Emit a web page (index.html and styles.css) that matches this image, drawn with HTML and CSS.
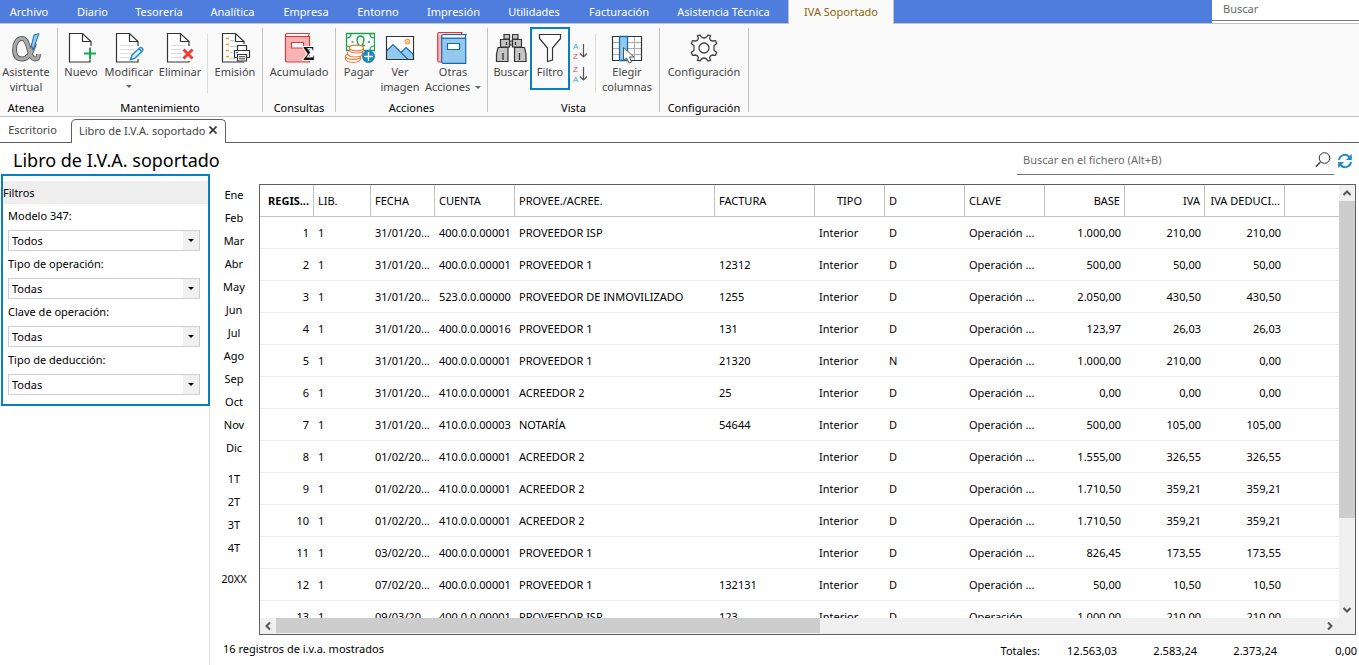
FILE: index.html
```
<!DOCTYPE html>
<html lang="es">
<head>
<meta charset="utf-8">
<title>Libro de I.V.A. soportado</title>
<link rel="stylesheet" href="styles.css">
</head>
<body>
<header class="menubar">
  <nav class="menu">
    <button>Archivo</button><button>Diario</button><button>Tesorería</button><button>Analítica</button><button>Empresa</button><button>Entorno</button><button>Impresión</button><button>Utilidades</button><button>Facturación</button><button>Asistencia Técnica</button><button class="current">IVA Soportado</button>
  </nav>
  <div class="global-search"><input type="text" placeholder="Buscar" aria-label="Buscar"></div>
</header>

<section class="ribbon">
  <div class="group">
    <div class="tools">
      <button class="tool w52">
        <svg viewBox="0 0 32 32"><path d="M24.500 11C22 20 18 27 12 27C7 27 4.500 23.500 4.500 17.500C4.500 11 7.500 6.500 12 6.500C20 6.500 18 27 25 27C28 27 28.500 25 28.500 22" fill="none" stroke="#606060" stroke-width="5"/><path d="M24.500 11C22 20 18 27 12 27C7 27 4.500 23.500 4.500 17.500C4.500 11 7.500 6.500 12 6.500C20 6.500 18 27 25 27C28 27 28.500 25 28.500 22" fill="none" stroke="#aaa" stroke-width="3"/><path d="M24 3L29 1.500L23 18L21.500 13Z" fill="#91c9f0" stroke="#1b6fb5"/></svg>
        <span>Asistente<br>virtual</span></button>
    </div>
    <h2>Atenea</h2>
  </div>
  <div class="group">
    <div class="tools maint">
      <button class="tool w40">
        <svg viewBox="0 0 32 32"><path d="M26 14V9.500L17.500 1.500H4.500V30H25V28M17.500 1.500V9.500H26" fill="#fff" stroke="#333" stroke-width="1.200"/><path d="M25 15.500V27.500M19 21.500H31" stroke="#16a850" stroke-width="2"/></svg>
        <span>Nuevo</span></button>
      <button class="tool w56">
        <svg viewBox="0 0 32 32"><path d="M25 14V9.500L16.500 1.500H3.500V30H25V27M16.500 1.500V9.500H25" fill="#fff" stroke="#333" stroke-width="1.200"/><path d="M7 13.500H21M7 17.500H21M7 21.500H18M7 25.500H16" stroke="#ddd"/><path d="M17.500 27.500L19 23L27 15.500Q28 15 29.500 16.500Q30.500 18 29.500 19L21.500 26.500ZM26 16.500L28.500 19.500" fill="#d7edfb" stroke="#2787cc" stroke-width="1.400"/></svg>
        <span>Modificar</span><i class="caret"></i></button>
      <button class="tool w46">
        <svg viewBox="0 0 32 32"><path d="M25 14V9.500L16.500 1.500H3.500V30H25V29M16.500 1.500V9.500H25" fill="#fff" stroke="#333" stroke-width="1.200"/><path d="M7 13.500H21M7 17.500H18M7 21.500H18M7 25.500H18" stroke="#ddd"/><path d="M19.500 17.500L28.500 26.500M28.500 17.500L19.500 26.500" stroke="#ee3b3b" stroke-width="3"/></svg>
        <span>Eliminar</span></button>
      <hr>
      <button class="tool w44">
        <svg viewBox="0 0 32 32"><path d="M25 12V9.500L16.500 1.500H3.500V30H25M16.500 1.500V9.500H25" fill="#fff" stroke="#333" stroke-width="1.200"/><path d="M7 6.500H10M7 12.500H10M7 18.500H10M7 24.500H10" stroke="#f39a1d" stroke-width="1.400"/><path d="M11 8.500H15M11 14.500H17M11 20.500H14M11 26.500H16" stroke="#c4c4c4"/><path d="M18.500 18.500V13.500H27.500V18.500M18.500 25.500H15.500V18.500H30.500V25.500H27.500M18.500 22.500H27.500V29H18.500Z" fill="#fff" stroke="#333" stroke-width="1.200"/><path d="M20 24.700H26M20 26.800H26" stroke="#333"/><path d="M17 20.500H19" stroke="#1586d0" stroke-width="1.400"/></svg>
        <span>Emisión</span></button>
    </div>
    <h2>Mantenimiento</h2>
  </div>
  <div class="group">
    <div class="tools">
      <button class="tool w66">
        <svg viewBox="0 0 32 32"><path d="M2.500 3Q2.500 1.500 4 1.500H26L25 4.500H26.500V30H4Q2.500 30 2.500 28Z" fill="#f6b4b5" stroke="#e0393c" stroke-width="1.200"/><path d="M3 3.500Q3 2 5 2H25.500L24.500 4.500H4Z" fill="#fff"/><path d="M3 4.500H26" stroke="#e0393c" stroke-width="1.200"/><path d="M8.500 10.500H20.500V16H8.500Z" fill="#fff" stroke="#e0393c" stroke-width="1.200"/><text x="20" y="28" class="sigma">Σ</text></svg>
        <span>Acumulado</span></button>
    </div>
    <h2>Consultas</h2>
  </div>
  <div class="group">
    <div class="tools actions">
      <button class="tool w36">
        <svg viewBox="0 0 32 32"><path d="M3.500 1.500H31.500V18.500H3.500Z" fill="#fff" stroke="#1ba04f" stroke-width="1.300"/><path d="M8 2Q8 6 4 6M27 2Q27 6 31 6M4 14Q8 14 8 18M31 14Q27 14 27 18" fill="none" stroke="#1ba04f" stroke-width="1.200"/><path d="M14 13.500H16Q13.500 10 14 7Q15 4 17.500 4Q20.500 4 21 7Q21 10 19 13.500H22M8.500 10H10.500M25 10H27" fill="none" stroke="#1ba04f" stroke-width="1.400"/><g fill="#fff" stroke="#ec7a3c" stroke-width="1.200"><path d="M2.500 24V27Q3 30 10 30.500Q17 30 17.500 27V24"/><ellipse cx="10" cy="24.500" rx="7.500" ry="2.800"/><path d="M4.500 20V22Q6 25 12 25Q19 25 19.500 22V19"/><path d="M6.500 16V18Q7 21 13.500 21Q20 21 20.500 18V16"/><ellipse cx="13.500" cy="16" rx="7" ry="2.800"/></g><circle cx="25.500" cy="24.500" r="6.500" fill="#1886c9"/><path d="M25.500 20V29M21 24.500H30" stroke="#fff" stroke-width="1.400"/></svg>
        <span>Pagar</span></button>
      <button class="tool w44">
        <svg viewBox="0 0 32 32"><path d="M2.500 4.500H29.500V27.500H2.500Z" fill="#fff"/><path d="M2.500 19L9 12.500L17 20.500L22 15.500L29.500 22V27.500H2.500Z" fill="#93c9ee"/><path d="M2.500 19L9 12.500L24 27.500M17 20.500L22 15.500L29.500 22.500" fill="none" stroke="#176db1" stroke-width="1.200"/><circle cx="23.500" cy="9.500" r="2.500" fill="#fbd58a" stroke="#ec8b42"/><path d="M2.500 4.500H29.500V27.500H2.500Z" fill="none" stroke="#333" stroke-width="1.200"/></svg>
        <span>Ver<br>imagen</span></button>
      <button class="tool w60">
        <svg viewBox="0 0 32 32"><path d="M.7 2Q.7.7 2 .7H25L24 3H26V30H2Q.7 30 .7 28Z" fill="#f6b4b5" stroke="#e0393c" stroke-width="1.200"/><path d="M1.500 1.500H24L23 3H2Z" fill="#fff"/><path d="M4.700 4Q4.700 2.500 6 2.500H29L28 6H28.700V31.300H6Q4.700 31 4.700 29Z" fill="#93c9ee" stroke="#1769ad" stroke-width="1.200"/><path d="M5.500 3.200H28L27.500 5.500H6Z" fill="#fff"/><path d="M5 6.300H28.500" stroke="#1769ad" stroke-width="1.200"/><path d="M10.500 11.500H22.500V17.500H10.500Z" fill="#fff" stroke="#1769ad" stroke-width="1.200"/></svg>
        <span>Otras<br>Acciones <i class="caret"></i></span></button>
    </div>
    <h2>Acciones</h2>
  </div>
  <div class="group">
    <div class="tools view">
      <button class="tool w36">
        <svg viewBox="0 0 32 32"><g fill="#c4c4c4" stroke="#333" stroke-width="1.200"><path d="M9 2.500H14.500V7H9ZM17.500 2.500H23V7H17.500Z"/><path d="M5.500 7.500H14.500V15H5.500ZM17.500 7.500H26.500V15H17.500ZM14.500 9H17.500V13H14.500Z"/><path d="M3 15.500H13V29.500H1.500V22ZM19.500 15.500H29.500L31 22V29.500H19.500Z"/></g><path d="M11.500 10V13M20.500 10V13M8 21V28M24.500 21V28" stroke="#333" stroke-width="1.300"/></svg>
        <span>Buscar</span></button>
      <button class="tool filter">
        <svg viewBox="0 0 32 32"><path d="M5.500 2.500H26.500V6.500L18.500 16V28L13.500 29.500V16L5.500 6.500Z" fill="#fff" stroke="#333" stroke-width="1.200"/></svg>
        <span>Filtro</span></button>
      <div class="sorts">
        <button aria-label="Orden ascendente"><svg viewBox="0 0 16 20"><text x="1" y="8" fill="#4a9bd8">A</text><text x="1" y="18" fill="#e0504f">Z</text><path d="M11.500 3V16M8 12.500L11.500 16L15 12.500" fill="none" stroke="#555" stroke-width="1.200"/></svg></button>
        <button aria-label="Orden descendente"><svg viewBox="0 0 16 20"><text x="1" y="8" fill="#e0504f">Z</text><text x="1" y="18" fill="#4a9bd8">A</text><path d="M11.500 3V16M8 12.500L11.500 16L15 12.500" fill="none" stroke="#555" stroke-width="1.200"/></svg></button>
      </div>
      <hr>
      <button class="tool w52">
        <svg viewBox="0 0 32 32"><path d="M1.500 4.500H30.500V28.500H1.500Z" fill="#fff"/><path d="M1.500 10.500H30.500M1.500 16.500H30.500M1.500 22.500H30.500M23.500 4.500V28.500" stroke="#aaa"/><path d="M1.500 4.500H30.500V28.500H1.500Z" fill="none" stroke="#333" stroke-width="1.200"/><path d="M8.500 4.500H16.500V28.500H8.500Z" fill="#93c9ee" stroke="#1769ad" stroke-width="1.300"/><path d="M12.500 15.500V28.500L15.500 26L18 31L20.500 30L18.500 25H23Z" fill="#fff" stroke="#555"/></svg>
        <span>Elegir<br>columnas</span></button>
    </div>
    <h2>Vista</h2>
  </div>
  <div class="group">
    <div class="tools">
      <button class="tool w82">
        <svg viewBox="0 0 32 32"><path d="M10.400 6.300L9.400 3.600L12 3Q13.500 6 16 6T20 3L22.600 3.600L21.600 6.300Q22 8.500 24.500 9L27.500 8.700L28.600 11.500L26 13.700V18.300L28.600 20.500L27.500 23.300L24.500 23Q22 23.500 21.600 25.700L22.600 28.400L20 29Q18.500 26 16 26T12 29L9.400 28.400L10.400 25.700Q10 23.500 7.500 23L4.500 23.300L3.400 20.500L6 18.300V13.700L3.400 11.500L4.500 8.700L7.500 9Q10 8.500 10.400 6.300Z" fill="#fff" stroke="#444" stroke-width="1.300"/><circle cx="16" cy="16" r="5" fill="none" stroke="#444" stroke-width="1.300"/></svg>
        <span>Configuración</span></button>
    </div>
    <h2>Configuración</h2>
  </div>
</section>

<nav class="doc-tabs">
  <button class="doc-tab desktop">Escritorio</button>
  <div class="doc-tab active"><span>Libro de I.V.A. soportado</span><button aria-label="Cerrar"><svg viewBox="0 0 8 8"><path d="M.5.5L7.500 7.500M7.500.5L.5 7.500" stroke="#333" stroke-width="1.600"/></svg></button></div>
  <div class="rest"></div>
</nav>

<div class="title-row">
  <h1>Libro de I.V.A. soportado</h1>
  <div class="file-search">
    <input type="text" placeholder="Buscar en el fichero (Alt+B)" aria-label="Buscar en el fichero">
    <svg viewBox="0 0 16 16"><circle cx="9.500" cy="6" r="5.300" fill="none" stroke="#333"/><path d="M5.500 10L.8 14.700" stroke="#333" stroke-width="1.300"/></svg>
  </div>
  <button class="refresh" aria-label="Actualizar"><svg viewBox="0 0 16 16"><path d="M2 7A6 6 0 0 1 12.500 4M14 9A6 6 0 0 1 3.500 12" fill="none" stroke="#2188cb" stroke-width="2"/><path d="M14.800 1V7H9ZM1.200 15V9H7Z" fill="#2188cb"/></svg></button>
</div>

<main class="workspace">
  <aside class="sidebar">
    <form class="filters">
      <h2>Filtros</h2>
      <label for="f1">Modelo 347:</label>
      <div class="select"><select id="f1"><option>Todos</option></select></div>
      <label for="f2">Tipo de operación:</label>
      <div class="select"><select id="f2"><option>Todas</option></select></div>
      <label for="f3">Clave de operación:</label>
      <div class="select"><select id="f3"><option>Todas</option></select></div>
      <label for="f4">Tipo de deducción:</label>
      <div class="select"><select id="f4"><option>Todas</option></select></div>
    </form>
  </aside>
  <nav class="periods">
    <button>Ene</button><button>Feb</button><button>Mar</button><button>Abr</button><button>May</button><button>Jun</button><button>Jul</button><button>Ago</button><button>Sep</button><button>Oct</button><button>Nov</button><button>Dic</button>
    <button class="first">1T</button><button>2T</button><button>3T</button><button>4T</button>
    <button class="first">20XX</button>
  </nav>
  <section class="content">
    <div class="grid">
      <div class="viewport">
        <table>
          <colgroup><col class="c54"><col class="c57"><col class="c64"><col class="c80"><col class="c200"><col class="c100"><col class="c70"><col class="c80"><col class="c80"><col class="c80"><col class="c80"><col class="c80"><col></colgroup>
          <thead><tr><th class="key">REGIS...</th><th>LIB.</th><th>FECHA</th><th>CUENTA</th><th>PROVEE./ACREE.</th><th>FACTURA</th><th class="mid">TIPO</th><th>D</th><th>CLAVE</th><th class="num">BASE</th><th class="num">IVA</th><th class="num">IVA DEDUCI...</th><th></th></tr></thead>
          <tbody>
            <tr><td>1</td><td>1</td><td>31/01/20...</td><td>400.0.0.00001</td><td>PROVEEDOR ISP</td><td></td><td>Interior</td><td>D</td><td>Operación ...</td><td>1.000,00</td><td>210,00</td><td>210,00</td><td></td></tr>
            <tr><td>2</td><td>1</td><td>31/01/20...</td><td>400.0.0.00001</td><td>PROVEEDOR 1</td><td>12312</td><td>Interior</td><td>D</td><td>Operación ...</td><td>500,00</td><td>50,00</td><td>50,00</td><td></td></tr>
            <tr><td>3</td><td>1</td><td>31/01/20...</td><td>523.0.0.00000</td><td>PROVEEDOR DE INMOVILIZADO</td><td>1255</td><td>Interior</td><td>D</td><td>Operación ...</td><td>2.050,00</td><td>430,50</td><td>430,50</td><td></td></tr>
            <tr><td>4</td><td>1</td><td>31/01/20...</td><td>400.0.0.00016</td><td>PROVEEDOR 1</td><td>131</td><td>Interior</td><td>D</td><td>Operación ...</td><td>123,97</td><td>26,03</td><td>26,03</td><td></td></tr>
            <tr><td>5</td><td>1</td><td>31/01/20...</td><td>400.0.0.00001</td><td>PROVEEDOR 1</td><td>21320</td><td>Interior</td><td>N</td><td>Operación ...</td><td>1.000,00</td><td>210,00</td><td>0,00</td><td></td></tr>
            <tr><td>6</td><td>1</td><td>31/01/20...</td><td>410.0.0.00001</td><td>ACREEDOR 2</td><td>25</td><td>Interior</td><td>D</td><td>Operación ...</td><td>0,00</td><td>0,00</td><td>0,00</td><td></td></tr>
            <tr><td>7</td><td>1</td><td>31/01/20...</td><td>410.0.0.00003</td><td>NOTARÍA</td><td>54644</td><td>Interior</td><td>D</td><td>Operación ...</td><td>500,00</td><td>105,00</td><td>105,00</td><td></td></tr>
            <tr><td>8</td><td>1</td><td>01/02/20...</td><td>410.0.0.00001</td><td>ACREEDOR 2</td><td></td><td>Interior</td><td>D</td><td>Operación ...</td><td>1.555,00</td><td>326,55</td><td>326,55</td><td></td></tr>
            <tr><td>9</td><td>1</td><td>01/02/20...</td><td>410.0.0.00001</td><td>ACREEDOR 2</td><td></td><td>Interior</td><td>D</td><td>Operación ...</td><td>1.710,50</td><td>359,21</td><td>359,21</td><td></td></tr>
            <tr><td>10</td><td>1</td><td>01/02/20...</td><td>410.0.0.00001</td><td>ACREEDOR 2</td><td></td><td>Interior</td><td>D</td><td>Operación ...</td><td>1.710,50</td><td>359,21</td><td>359,21</td><td></td></tr>
            <tr><td>11</td><td>1</td><td>03/02/20...</td><td>400.0.0.00001</td><td>PROVEEDOR 1</td><td></td><td>Interior</td><td>D</td><td>Operación ...</td><td>826,45</td><td>173,55</td><td>173,55</td><td></td></tr>
            <tr><td>12</td><td>1</td><td>07/02/20...</td><td>400.0.0.00001</td><td>PROVEEDOR 1</td><td>132131</td><td>Interior</td><td>D</td><td>Operación ...</td><td>50,00</td><td>10,50</td><td>10,50</td><td></td></tr>
            <tr><td>13</td><td>1</td><td>09/03/20...</td><td>400.0.0.00001</td><td>PROVEEDOR ISP</td><td>123</td><td>Interior</td><td>D</td><td>Operación ...</td><td>1.000,00</td><td>210,00</td><td>210,00</td><td></td></tr>
          </tbody>
        </table>
      </div>
      <div class="vbar">
        <button aria-label="Subir"><svg viewBox="0 0 16 16"><path d="M4.500 10L8 6.500L11.500 10" fill="none" stroke="#555" stroke-width="2"/></svg></button>
        <div class="track"><div class="thumb"></div></div>
        <button aria-label="Bajar"><svg viewBox="0 0 16 16"><path d="M4.500 6L8 9.500L11.500 6" fill="none" stroke="#555" stroke-width="2"/></svg></button>
      </div>
      <div class="hbar">
        <button aria-label="Izquierda"><svg viewBox="0 0 16 16"><path d="M10 4.500L6.500 8L10 11.500" fill="none" stroke="#555" stroke-width="2"/></svg></button>
        <div class="track"><div class="thumb"></div></div>
        <button aria-label="Derecha"><svg viewBox="0 0 16 16"><path d="M6 4.500L9.500 8L6 11.500" fill="none" stroke="#555" stroke-width="2"/></svg></button>
      </div>
    </div>
  </section>
  <footer class="status">
    <p>16 registros de i.v.a. mostrados</p>
    <div class="totals"><span>Totales:</span><span>12.563,03</span><span>2.583,24</span><span>2.373,24</span><span>0,00</span></div>
  </footer>
</main>
</body>
</html>
```
FILE: styles.css
```
* { box-sizing: border-box; }
body {
  margin: 0;
  height: 100vh;
  display: flex;
  flex-direction: column;
  overflow: hidden;
  background: #fff;
  color: #000;
  font: 11px/15px "Noto Sans", "Open Sans", sans-serif;
}
button, input, select { font: inherit; color: inherit; margin: 0; padding: 0; border: 0; background: none; }
h1, h2, p { margin: 0; font-size: inherit; font-weight: 400; }
svg { display: block; flex: none; }

/* Menu bar */
.menubar { display: flex; height: 24px; background: #4e7ddd; border-bottom: 1px solid #c2c2c2; flex: none; }
.menu { display: grid; grid-template-columns: 58px 69px 64px 83px 64px 80px 71px 90px 80px 129px 106px; height: 24px; }
.menu button { padding-bottom: 2px; color: #fff; }
.menu .current { background: #fafafa; color: #8a6508; border-left: 1px solid #c2c2c2; border-right: 1px solid #c2c2c2; }
.global-search { margin-left: auto; width: 147px; background: #fff; }
.global-search input { display: block; width: 100%; height: 21px; padding: 0 0 3px 11px; border-bottom: 1px solid #777; }
input::placeholder { color: #6a6a6a; opacity: 1; }

/* Ribbon */
.ribbon { display: flex; height: 93px; padding: 4px 0; background: #fafafa; border-bottom: 1px solid #c2c2c2; flex: none; }
.group { display: flex; flex-direction: column; justify-content: space-between; height: 84px; padding: 0 3px; border-right: 1px solid #c2c2c2; }
.group:first-child { padding: 0 5px 0 0; }
.group h2 { text-align: center; line-height: 8px; white-space: nowrap; }
.tools { display: flex; height: 66px; align-items: flex-start; }
.tools hr { width: 1px; height: 59px; margin: 6px 5px 0; border: 0; background: #ddd; flex: none; }
.tool { display: flex; flex-direction: column; align-items: center; padding-top: 4px; color: #444; white-space: nowrap; flex: none; }
.tool svg { width: 32px; height: 32px; }
.tool .sigma { font: bold 18px "Liberation Serif", serif; fill: #111; stroke: #fff; stroke-width: 2px; paint-order: stroke; }
.tool .caret { margin-top: 6px; }
.tool span .caret { display: inline-block; margin: 0 0 2px 2px; }
.caret { border: 3px solid transparent; border-top-color: #666; border-bottom: 0; }
.w36 { width: 36px; } .w40 { width: 40px; } .w44 { width: 44px; } .w46 { width: 46px; } .w52 { width: 52px; }
.w56 { width: 56px; } .w60 { width: 60px; } .w66 { width: 66px; } .w82 { width: 82px; }
.maint { padding-right: 2px; }
.maint hr { margin-left: 4px; }
.actions { gap: 1px; padding: 0 1px 0 2px; }
.view { padding: 0 3px 0 2px; }
.filter { width: 40px; height: 63px; margin: -1px 0 0 1px; padding-top: 3px; border: 2px solid #0a80c4; }
.sorts { display: grid; gap: 3px; padding: 13px 0 0 2px; width: 20px; }
.sorts svg { width: 16px; height: 20px; font: 8px "Liberation Sans", sans-serif; overflow: visible; }

/* Document tabs */
.doc-tabs { display: flex; height: 26px; flex: none; color: #444; }
.doc-tab { border-bottom: 1px solid #606060; }
.desktop { width: 71px; padding-right: 6px; }
.active { display: flex; align-items: center; gap: 4px; width: 155px; margin-top: 2px; padding: 0 0 3px 7px; border: 1px solid #606060; border-bottom: 0; border-radius: 5px 5px 0 0; white-space: nowrap; }
.active svg { width: 8px; height: 8px; }
.rest { flex: 1; border-bottom: 1px solid #606060; }

/* Title */
.title-row { display: flex; height: 32px; padding-right: 7px; flex: none; }
.title-row h1 { padding-left: 13px; font-size: 18px; line-height: 34px; flex: 1; }
.file-search { display: flex; align-items: center; width: 317px; padding: 2px 3px 0 6px; border-bottom: 1px solid #777; }
.file-search input { flex: 1; }
.file-search svg, .refresh svg { width: 16px; height: 16px; }
.refresh { width: 18px; padding: 4px 0 0 3px; }

/* Workspace */
.workspace { display: grid; grid-template: minmax(0, 1fr) 30px / 210px 49px minmax(0, 1fr); flex: 1; min-height: 0; }
.sidebar { grid-row: 1 / 3; border-right: 1px solid #ddd; }
.filters { position: relative; width: 209px; height: 232px; margin: -1px 0 0 1px; padding-top: 5px; border: 2px solid #0a80c4; }
.filters h2 { height: 23px; line-height: 23px; background: #eee; }
.filters label { display: block; height: 26px; padding: 4px 0 0 5px; }
.select { position: relative; width: 192px; height: 21px; margin: 0 0 1px 5px; }
.select select { appearance: none; width: 100%; height: 21px; padding: 0 20px 0 3px; border: 1px solid #d0d0d0; background: linear-gradient(#f0f0f0, #f0f0f0) right / 16px 100% no-repeat #fff; }
.select::after { content: ""; position: absolute; right: 6px; top: 9px; border: 3px solid transparent; border-top-color: #000; border-bottom: 0; pointer-events: none; }
.periods { display: flex; flex-direction: column; padding: 8px 1px 0 0; }
.periods button { height: 23px; flex: none; }
.periods .first { margin-top: 8px; }
.content { padding: 9px 3px 0 0; min-width: 0; display: flex; }
.grid { flex: 1; min-width: 0; display: grid; grid-template: minmax(0, 1fr) 16px / minmax(0, 1fr) 16px; border: 1px solid #606060; background: #f0f0f0; }
.viewport { overflow: hidden; background: #fff; }
table { width: 100%; table-layout: fixed; border-collapse: separate; border-spacing: 0; }
th, td { height: 32px; padding: 0 4px 1px; text-align: left; font-weight: 400; white-space: nowrap; overflow: hidden; border-bottom: 1px solid #ececec; }
th { border-right: 1px solid #c2c2c2; border-bottom-color: #c2c2c2; }
td:nth-child(4) { padding-right: 0; }
th:last-child { border-right: 0; }
th.key { font-weight: 700; text-align: right; padding-left: 0; }
th.mid { text-align: center; }
th.num, td:first-child, td:nth-child(n+10) { text-align: right; }
td:first-child { padding-right: 5px; }
.c54 { width: 54px; } .c57 { width: 57px; } .c64 { width: 64px; } .c70 { width: 70px; }
.c80 { width: 80px; } .c100 { width: 100px; } .c200 { width: 200px; }
.vbar, .hbar { display: flex; }
.vbar { flex-direction: column; }
.hbar { padding-right: 1px; }
.vbar button, .hbar button { width: 16px; height: 16px; }
.track { flex: 1; }
.vbar .thumb { height: 79%; background: #cdcdcd; }
.hbar .thumb { width: 52%; height: 15px; background: #cdcdcd; }
.status { grid-column: 2 / 4; display: flex; justify-content: space-between; padding: 6px 2px 0 13px; }
.totals { display: grid; grid-template-columns: 50px 77px 80px 80px 80px; text-align: right; line-height: 20px; }
```
